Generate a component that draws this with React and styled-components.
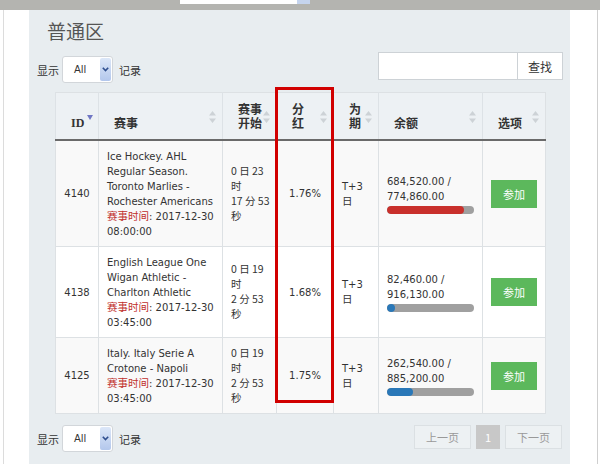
import React from 'react';
import styled, { createGlobalStyle } from 'styled-components';

const GlobalStyle = createGlobalStyle`
  html, body {
    margin: 0;
    padding: 0;
    background: #fff;
  }
  body {
    font-family: "DejaVu Sans", "Noto Sans CJK SC", sans-serif;
    font-size: 10px;
    color: #333;
  }
`;

const Page = styled.div`
  width: 600px;
  height: 464px;
  overflow: hidden;
  display: flex;
  flex-direction: column;
`;

const TopBar = styled.div`
  height: 10px;
  flex: none;
  background: #b4b4b0;
  padding-left: 180px;
  display: flex;
  align-items: flex-start;
`;

const TopInput = styled.div`
  width: 117px;
  height: 4px;
  background: #fff;
  border-right: 13px solid #c5d4ee;
`;

const Body = styled.div`
  flex: 1;
  display: flex;
`;

const Gutter = styled.div`
  width: 26px;
  margin-left: 3px;
  border-left: 1px solid #dcdcdc;
  box-sizing: border-box;
`;

const RightGutter = styled.div`
  width: 28px;
  margin-right: 2px;
  border-right: 1px solid #cfcfcf;
  box-sizing: border-box;
`;

const Panel = styled.section`
  width: 541px;
  box-sizing: border-box;
  background: #e8edf0;
  padding: 0 7px 0 8px;
`;

const Title = styled.h2`
  margin: 8px 0 0 10px;
  font-family: "Noto Sans CJK SC", sans-serif;
  font-weight: normal;
  font-size: 19px;
  line-height: 26px;
  color: #555;
`;

const Toolbar = styled.div`
  display: flex;
  justify-content: space-between;
  align-items: flex-start;
  margin-top: 8px;
`;

const Length = styled.div`
  display: flex;
  align-items: center;
  gap: 3px;
  margin-top: ${({ $offset }) => $offset || 0}px;
  font-family: "Noto Sans CJK SC", sans-serif;
  font-size: 11px;
  color: #333;

  span:last-child {
    margin-left: 3px;
  }
`;

const SelectBox = styled.div`
  width: 51px;
  height: 27px;
  box-sizing: border-box;
  background: #fff;
  border: 1px solid #d2d6da;
  border-radius: 3px;
  display: flex;
  align-items: stretch;
  overflow: hidden;
  font-family: "DejaVu Sans", sans-serif;
  font-size: 10px;
`;

const SelectValue = styled.div`
  flex: 1;
  display: flex;
  align-items: center;
  padding-left: 11px;
`;

const SelectArrow = styled.div`
  width: 11px;
  margin: 1px;
  border-radius: 2px;
  background: linear-gradient(#dce7f8, #b3c7ec);
  display: flex;
  align-items: center;
  justify-content: center;
`;

const Search = styled.div`
  display: flex;
`;

const SearchInput = styled.div`
  width: 140px;
  height: 28px;
  box-sizing: border-box;
  background: #fff;
  border: 1px solid #cdd2d6;
`;

const SearchButton = styled.button`
  width: 45px;
  height: 28px;
  box-sizing: border-box;
  background: #fff;
  border: 1px solid #cdd2d6;
  border-left: none;
  font-family: "Noto Sans CJK SC", sans-serif;
  font-size: 12px;
  color: #333;
  padding: 0;
`;

const TableWrap = styled.div`
  position: relative;
  margin: 9px 18px 0;
`;

const Table = styled.table`
  width: 490px;
  table-layout: fixed;
  border-collapse: collapse;
  border: 1px solid #dde1e4;
`;

const Th = styled.th`
  position: relative;
  background: #edf1f4;
  border-left: 1px solid #dde2e6;
  border-bottom: 2px solid #6a6a6a;
  height: 37px;
  padding: 0 12px 9px 15px;
  vertical-align: bottom;
  text-align: left;
  font-family: ${({ $serif }) =>
    $serif ? '"Liberation Serif", serif' : '"Noto Sans CJK SC", sans-serif'};
  font-weight: bold;
  font-size: 12px;
  line-height: 14px;
  color: #333;
`;

const SortIcon = styled.svg`
  position: absolute;
  right: 6px;
  top: 18px;
`;

const SortDesc = styled.svg`
  position: absolute;
  left: 31px;
  top: 22px;
`;

const Tr = styled.tr`
  background: ${({ $odd }) => ($odd ? '#f9f9f9' : '#fff')};
`;

const Td = styled.td`
  border: 1px solid #dde1e4;
  padding: 7.5px 8px;
  vertical-align: middle;
  text-align: ${({ $center }) => ($center ? 'center' : 'left')};
  line-height: 15px;
  white-space: nowrap;
  color: #333;
`;

const Cn = styled.span`
  font-family: "Noto Sans CJK SC", sans-serif;
  font-size: 10.5px;
  line-height: 1;
`;

const TimeLabel = styled(Cn)`
  color: #c0302c;
`;

const Track = styled.div`
  width: 87px;
  height: 8px;
  margin-top: 2px;
  border-radius: 4px;
  background: #a0a0a0;
  overflow: hidden;
`;

const Fill = styled.div`
  height: 100%;
  border-radius: 4px;
  background: ${({ $color }) => $color};
`;

const JoinButton = styled.button`
  width: 46px;
  height: 28px;
  border: none;
  background: #5cb85c;
  color: #fff;
  font-family: "Noto Sans CJK SC", sans-serif;
  font-size: 11px;
  padding: 0;
`;

const Highlight = styled.div`
  position: absolute;
  left: 220px;
  top: -5px;
  width: 59px;
  height: 316px;
  box-sizing: border-box;
  border: 3px solid #d10000;
  pointer-events: none;
`;

const Footer = styled.div`
  display: flex;
  justify-content: space-between;
  align-items: flex-start;
  margin-top: 11px;
`;

const Pager = styled.div`
  display: flex;
  gap: 5px;
  margin-right: 1px;
`;

const PageButton = styled.div`
  height: 24px;
  min-width: 24px;
  box-sizing: border-box;
  padding: 0 ${({ $active }) => ($active ? 0 : 11)}px;
  display: flex;
  align-items: center;
  justify-content: center;
  border: 1px solid ${({ $active }) => ($active ? '#c8c8c8' : '#dbe0e3')};
  background: ${({ $active }) => ($active ? '#c8c8c8' : '#edf1f3')};
  color: ${({ $active }) => ($active ? '#fff' : '#999')};
  font-family: "Noto Sans CJK SC", sans-serif;
  font-size: 11px;
`;

const rows = [
  {
    id: 4140,
    event: ['Ice Hockey. AHL', 'Regular Season.', 'Toronto Marlies -', 'Rochester Americans'],
    date: '2017-12-30',
    time: '08:00:00',
    start: ['0 日 23', '时', '17 分 53', '秒'],
    rate: '1.76%',
    raised: 684520,
    total: 774860,
    color: '#c9302c',
  },
  {
    id: 4138,
    event: ['English League One', 'Wigan Athletic -', 'Charlton Athletic'],
    date: '2017-12-30',
    time: '03:45:00',
    start: ['0 日 19', '时', '2 分 53', '秒'],
    rate: '1.68%',
    raised: 82460,
    total: 916130,
    color: '#2a78b8',
  },
  {
    id: 4125,
    event: ['Italy. Italy Serie A', 'Crotone - Napoli'],
    date: '2017-12-30',
    time: '03:45:00',
    start: ['0 日 19', '时', '2 分 53', '秒'],
    rate: '1.75%',
    raised: 262540,
    total: 885200,
    color: '#2a78b8',
  },
];

const money = (n) =>
  n.toLocaleString('en-US', { minimumFractionDigits: 2, maximumFractionDigits: 2 });

function Sort() {
  return (
    <SortIcon width="7" height="12" viewBox="0 0 7 12">
      <path d="M3.5 0 L7 4.5 H0 Z M3.5 12 L7 7.5 H0 Z" fill="#cdd2d6" />
    </SortIcon>
  );
}

function LengthMenu({ offset }) {
  return (
    <Length $offset={offset}>
      <span>显示</span>
      <SelectBox>
        <SelectValue>All</SelectValue>
        <SelectArrow>
          <svg width="7" height="5" viewBox="0 0 7 5">
            <path d="M0.8 0.8 L3.5 3.6 L6.2 0.8" fill="none" stroke="#2f4f8f" strokeWidth="1.6" />
          </svg>
        </SelectArrow>
      </SelectBox>
      <span>记录</span>
    </Length>
  );
}

function lines(arr) {
  return arr.map((l, i) => (
    <React.Fragment key={i}>
      {l}
      {i < arr.length - 1 && <br />}
    </React.Fragment>
  ));
}

export default function App() {
  return (
    <Page>
      <GlobalStyle />
      <TopBar>
        <TopInput />
      </TopBar>
      <Body>
        <Gutter />
        <Panel>
          <Title>普通区</Title>
          <Toolbar>
            <LengthMenu offset={4} />
            <Search>
              <SearchInput />
              <SearchButton>查找</SearchButton>
            </Search>
          </Toolbar>

          <TableWrap>
            <Table>
              <colgroup>
                <col style={{ width: 43 }} />
                <col style={{ width: 124 }} />
                <col style={{ width: 54 }} />
                <col style={{ width: 57 }} />
                <col style={{ width: 45 }} />
                <col style={{ width: 104 }} />
                <col style={{ width: 63 }} />
              </colgroup>
              <thead>
                <tr>
                  <Th $serif>
                    ID
                    <SortDesc width="6" height="5" viewBox="0 0 6 5">
                      <path d="M0 0 H6 L3 5 Z" fill="#7077c4" />
                    </SortDesc>
                  </Th>
                  <Th>赛事<Sort /></Th>
                  <Th>赛事<br />开始<Sort /></Th>
                  <Th>分<br />红<Sort /></Th>
                  <Th>为<br />期<Sort /></Th>
                  <Th>余额<Sort /></Th>
                  <Th>选项<Sort /></Th>
                </tr>
              </thead>
              <tbody>
                {rows.map((r, i) => (
                  <Tr key={r.id} $odd={i % 2 === 0}>
                    <Td $center>{r.id}</Td>
                    <Td>
                      {lines(r.event)}
                      <br />
                      <TimeLabel>赛事时间</TimeLabel>: {r.date}
                      <br />
                      {r.time}
                    </Td>
                    <Td>
                      {r.start.map((l, j) => (
                        <React.Fragment key={j}>
                          <Cn>{l}</Cn>
                          {j < r.start.length - 1 && <br />}
                        </React.Fragment>
                      ))}
                    </Td>
                    <Td $center>{r.rate}</Td>
                    <Td>
                      T+3
                      <br />
                      <Cn>日</Cn>
                    </Td>
                    <Td>
                      {money(r.raised)} /
                      <br />
                      {money(r.total)}
                      <Track>
                        <Fill
                          $color={r.color}
                          style={{ width: `${(r.raised / r.total) * 100}%` }}
                        />
                      </Track>
                    </Td>
                    <Td $center>
                      <JoinButton>参加</JoinButton>
                    </Td>
                  </Tr>
                ))}
              </tbody>
            </Table>
            <Highlight />
          </TableWrap>

          <Footer>
            <LengthMenu />
            <Pager>
              <PageButton>上一页</PageButton>
              <PageButton $active>1</PageButton>
              <PageButton>下一页</PageButton>
            </Pager>
          </Footer>
        </Panel>
        <RightGutter />
      </Body>
    </Page>
  );
}
